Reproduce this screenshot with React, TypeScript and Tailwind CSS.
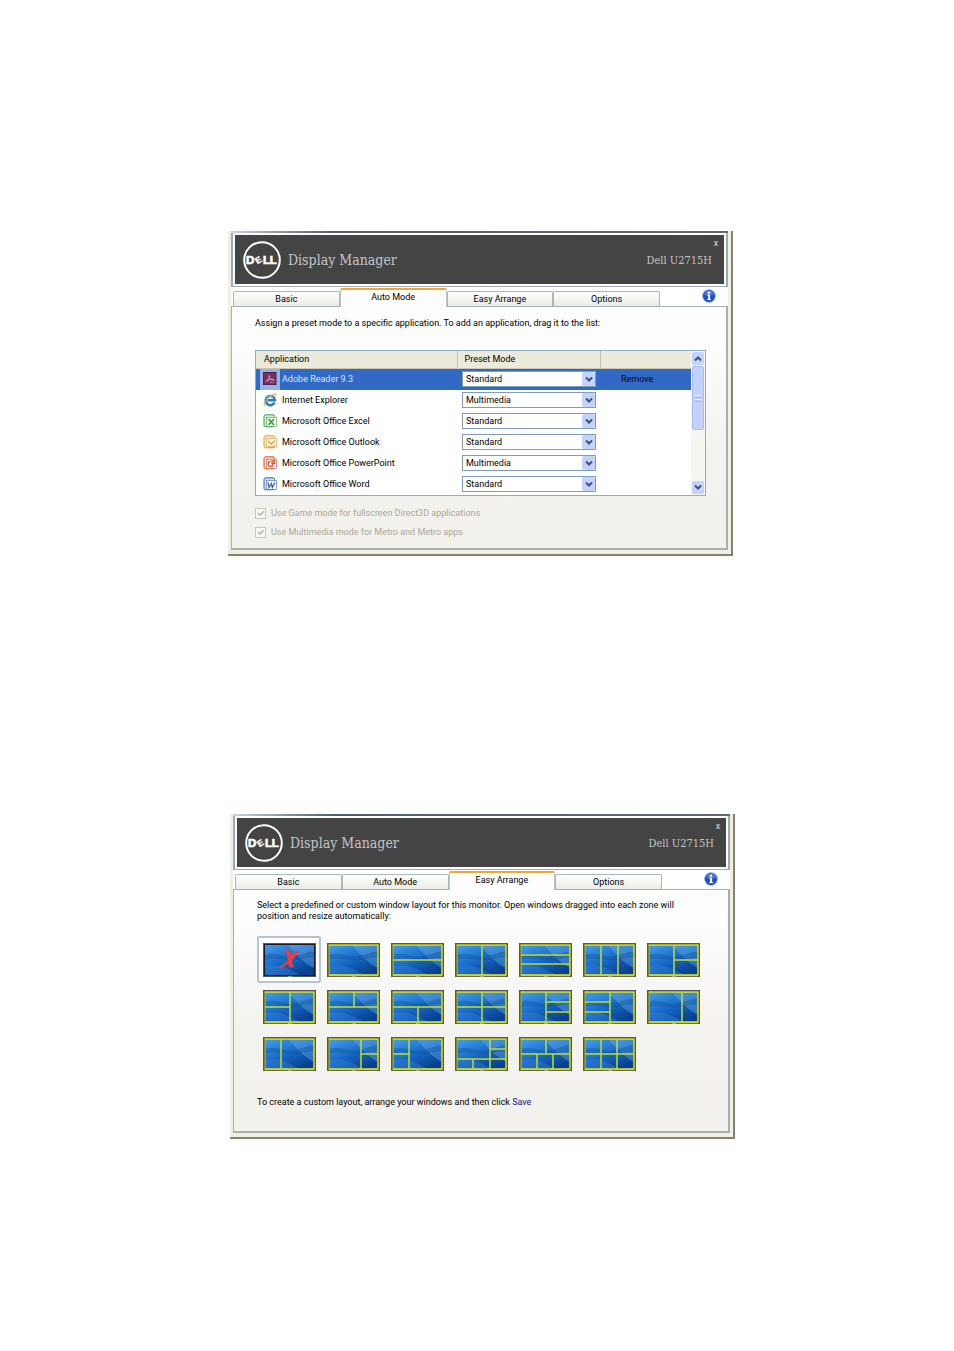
import { useId, useState } from 'react'
import type { ReactNode } from 'react'
import { twMerge } from 'tailwind-merge'

type Line = [number, number, number, number]

interface TypeApp {
  name: string
  mode: string
  icon: ReactNode
}

const TABS = ['Basic', 'Auto Mode', 'Easy Arrange', 'Options']
const MODES = ['Standard', 'Multimedia', 'Movie', 'Game', 'Paper', 'Color Temp.']

// divider lines inside a 53x34 monitor
const LAYOUTS: Line[][] = [
  [],
  [],
  [[2, 17, 51, 17]],
  [[27, 2, 27, 32]],
  [[2, 12, 51, 12], [2, 21, 51, 21]],
  [[18, 2, 18, 32], [35, 2, 35, 32]],
  [[27, 2, 27, 32], [27, 17, 51, 17]],
  [[27, 2, 27, 32], [2, 17, 27, 17]],
  [[2, 17, 51, 17], [27, 2, 27, 17]],
  [[2, 17, 51, 17], [27, 17, 27, 32]],
  [[27, 2, 27, 32], [2, 17, 51, 17]],
  [[27, 2, 27, 32], [27, 12, 51, 12], [27, 22, 51, 22]],
  [[27, 2, 27, 32], [2, 12, 27, 12], [2, 22, 27, 22]],
  [[35, 2, 35, 32]],
  [[18, 2, 18, 32]],
  [[34, 2, 34, 32], [34, 17, 51, 17]],
  [[18, 2, 18, 32], [2, 17, 18, 17]],
  [[35, 2, 35, 32], [35, 12, 51, 12], [2, 22, 51, 22], [18, 22, 18, 32]],
  [[2, 17, 51, 17], [27, 2, 27, 17], [18, 17, 18, 32], [34, 17, 34, 32]],
  [[18, 2, 18, 32], [34, 2, 34, 32], [2, 17, 51, 17]],
]

function DellLogo(){
  return <svg className="h-10 w-10 flex-none" viewBox="0 0 40 40" role="img" aria-label="Dell">
    <circle cx="20" cy="20" r="17.8" fill="none" stroke="#fff" strokeWidth="2" />
    <g fill="#fff" stroke="#fff" strokeWidth="0.7" fontFamily="'Liberation Sans', sans-serif" fontWeight="700" fontSize="11.5">
      <text x="4" y="24">D</text>
      <text x="13.400" y="23" transform="rotate(-32 16.500 20)" fontSize="9" strokeWidth="0.300">E</text>
      <text x="21" y="24">L</text>
      <text x="27.8" y="24">L</text>
    </g>
  </svg>
}

function InfoIcon(){
  return <svg className="h-3.5 w-3.5" viewBox="0 0 14 14">
    <circle cx="7" cy="7" r="6.3" fill="#1f4fc4" stroke="#7f9be0" strokeWidth="0.8" />
    <path d="M2 5.5a5.2 5.2 0 0 1 10 0c-3 1.300-7 1.300-10 0z" fill="#4d7be6" />
    <circle cx="7" cy="3.700" r="1.200" fill="#fff" />
    <path d="M5.400 5.800h2.700v4.200h.9v1.100H5.200V10h.9V6.900h-.7z" fill="#fff" />
  </svg>
}

function Chevron({ up }: { up?: boolean }){
  return <svg className="h-2 w-2" viewBox="0 0 8 8">
    <path d={up ? 'M1 5.500l3-3 3 3' : 'M1 2.500l3 3 3-3'} fill="none" stroke="#3c5079" strokeWidth="2" />
  </svg>
}

function AdobeIcon(){
  return <svg className="h-3.5 w-3.5" viewBox="0 0 14 14">
    <rect x="0.500" y="0.500" width="12.500" height="12" fill="#7a2f62" stroke="#4c2457" />
    <path d="M3 9.500c2-1 3.500-3.500 3.300-6M6.200 3.500c0 2.500 2 4.500 5 4.500M3 9.500c2.500-2 5-2.300 8-1.500M7 10.500h1.500M10 10.500h1" fill="none" stroke="#d9a9c6" strokeWidth="0.900" />
  </svg>
}

function ExplorerIcon(){
  return <svg className="h-3.5 w-3.5" viewBox="0 0 14 14">
    <path d="M11.500 9.500a4.600 4.600 0 1 1 .4-2.200H4.500" fill="none" stroke="#2479d4" strokeWidth="2.600" />
    <path d="M3.400 6a4 4 0 0 1 6.500-1.500" fill="none" stroke="#79c6f7" strokeWidth="1" />
    <path d="M1.800 12.800C-.5 11 5.500 3 10.500 1.300c2.500-.8 2.800.4 2.200 2" fill="none" stroke="#efb035" strokeWidth="1.200" />
  </svg>
}

function OfficeIcon({ color, tint, children }: { color: string, tint: string, children: ReactNode }){
  return <svg className="h-3.5 w-3.5" viewBox="0 0 14 14">
    <rect x="1" y="0.800" width="10.500" height="12" rx="1.500" fill={tint} stroke={color} strokeWidth="1" />
    <rect x="3.300" y="3.300" width="10" height="9" fill="#fff" stroke={color} strokeWidth="0.600" />
    <g fill="none" stroke={color} strokeWidth="1.800">{children}</g>
  </svg>
}

const APPS: TypeApp[] = [
  { name: 'Adobe Reader 9.3', mode: 'Standard', icon: <AdobeIcon /> },
  { name: 'Internet Explorer', mode: 'Multimedia', icon: <ExplorerIcon /> },
  {
    name: 'Microsoft Office Excel',
    mode: 'Standard',
    icon: <OfficeIcon color="#3f9a47" tint="#d5efd2"><path d="M5.500 5l5.500 6M11 5l-5.500 6" /></OfficeIcon>
  },
  {
    name: 'Microsoft Office Outlook',
    mode: 'Standard',
    icon: <OfficeIcon color="#e5a03a" tint="#fde9bd"><path d="M5 6l3.300 3L12 5.500M5 11c2 1.500 5 1.500 7-.5" strokeWidth="1.400" /></OfficeIcon>
  },
  {
    name: 'Microsoft Office PowerPoint',
    mode: 'Multimedia',
    icon: <OfficeIcon color="#e2562b" tint="#fbd3c2"><path d="M7.500 5.500a2.500 2.500 0 1 0 2.500 3M9 7.500V5h2.500v2.500z" strokeWidth="1.300" /></OfficeIcon>
  },
  {
    name: 'Microsoft Office Word',
    mode: 'Standard',
    icon: <OfficeIcon color="#3a66b0" tint="#cfe0f6"><path d="M5 5.500l1 5 2.500-4 .8 4 2.700-5" strokeWidth="1.300" /></OfficeIcon>
  },
]

function Monitor({ lines, off }: { lines: Line[], off?: boolean }){
  const id = useId()
  return <svg className="h-[34px] w-[53px]" viewBox="0 0 53 34">
    <defs>
      <linearGradient id={id} x1="0" y1="0" x2="0.700" y2="1">
        <stop offset="0" stopColor="#459eee" />
        <stop offset="0.550" stopColor="#1769c6" />
        <stop offset="1" stopColor="#07408f" />
      </linearGradient>
    </defs>
    <rect x="0.500" y="0.500" width="52" height="33" fill="#1b1b22" stroke="#55555c" />
    <rect x="2" y="2" width="49" height="30" fill={`url(#${id})`} />
    <path d="M25 2h26v23C42 20 33 12 25 2z" fill="#7db9f0" opacity="0.350" />
    <path d="M2 12c12-4 20 4 31 1s12-5 18-4v6c-10-1-16 4-27 2S8 15 2 17z" fill="#0d4f86" opacity="0.350" />
    <path d="M2 23c14-3 24 3 35 9H2z" fill="#3d8de6" opacity="0.350" />
    {
      off
        ? <path d="M15.500 24.500C22 21 28 15 32 8l4.500-.5C31 16 25 22 18.500 24.800zM20.500 8l4.500-1c2 0 2.500 2 3 5l1.500 9c.2 1.300.8 1.700 2 1.500-.8 1.500-2 2-3.500 2-2 0-2.400-1.500-2.800-4L24 12c-.4-2-.8-3-3.500-4z" fill="#f03c40" />
        : <g fill="none">
          <path d="M2 1.500v31h49" stroke="#a9ad12" strokeWidth="1.500" />
          <path d="M1.500 2H51v30H2" stroke="#d8e818" strokeWidth="1.500" />
          {lines.map((l, i)=><line key={i} x1={l[0]} y1={l[1]} x2={l[2]} y2={l[3]} stroke="#bfdd2c" strokeWidth="1.500" />)}
        </g>
    }
    <path d="M25 33.300h4" stroke="#b0b0a8" strokeWidth="1" />
  </svg>
}

interface WindowProps {
  active: string
  className?: string
  children: ReactNode
}

function ManagerWindow(props: WindowProps){
  const { active, className, children } = props
  return <section className={twMerge('flex w-full max-w-[505px] flex-col border-b-2 border-r-2 border-[#85836f] bg-[#f1eee2] pb-1 pl-[3px] pr-[3px]', className)}>
    <div className="h-0.5 bg-linear-to-r from-[#c3d6e4] via-[#4f6072] via-20% to-[#5d6b7a]" />
    <header className="border-x-2 border-b border-[#9aaab8] bg-white p-0.5">
      <div className="flex h-[49px] items-center bg-[#444] pl-[7px] pr-3">
        <DellLogo />
        <h1 className="ml-1.5 flex-1 font-['DejaVu_Serif_Condensed','DejaVu_Serif',serif] text-[14px] leading-4 text-[#c4c4c4]">Display Manager</h1>
        <div className="flex flex-col items-end self-stretch">
          <button type="button" aria-label="Close" className="-mr-2.5 h-4 w-3 text-[9px] leading-4 text-[#ddd]">x</button>
          <span className="pt-0.5 font-['DejaVu_Serif_Condensed','DejaVu_Serif',serif] text-[11px] leading-4 text-[#c4c4c4]">Dell U2715H</span>
        </div>
      </div>
    </header>
    <div className="flex bg-white pt-px">
      <div role="tablist" className="flex h-[18px] flex-1 items-end pl-0.5">
        {
          TABS.map(tab=>{
            const on = tab === active
            return <button type="button" role="tab" aria-selected={on} key={tab}
              className={twMerge(
                'h-[15px] flex-1 rounded-t-xs border border-b-0 border-[#a9b8b9] bg-linear-to-b from-white to-[#ecebe5] text-center leading-[14px]',
                on && 'z-10 -mb-px h-[19px] border-x-[#b9c6c8] border-t-2 border-t-[#f0a832] bg-none bg-[#fdfdfe] pb-1'
              )}>{tab}</button>
          })
        }
      </div>
      <button type="button" aria-label="About" className="mx-3 ml-[42px] flex h-4 items-center"><InfoIcon /></button>
    </div>
    <div role="tabpanel" className="h-[244px] border border-b-2 border-r-2 border-[#a3b1b5] bg-linear-to-b from-[#fdfdfe] from-15% via-[#f4f2ee] via-60% to-[#f3f1ec] pl-[23px] pr-5">
      {children}
    </div>
  </section>
}

function ModeSelect({ app }: { app: TypeApp }){
  return <div className="relative h-4 w-[134px]">
    <select aria-label={`Preset mode for ${app.name}`} defaultValue={app.mode}
      className="block h-4 w-full appearance-none border border-[#7f9db9] bg-white pl-[3px] leading-[14px]">
      {MODES.map(mode=><option key={mode}>{mode}</option>)}
    </select>
    <span className="pointer-events-none absolute inset-y-px right-px flex w-[13px] items-center justify-center rounded-xs bg-[#c4d3fb]"><Chevron /></span>
  </div>
}

function AutoMode(){
  return <>
    <p className="mt-2 leading-4">Assign a preset mode to a specific application. To add an application, drag it to the list:</p>
    <div className="mt-[19px] flex border border-[#8fadc8] bg-white">
      <table className="flex-1 table-fixed border-collapse">
        <thead>
          <tr className="h-[17px] border-b border-[#cbc7b8] bg-[#ebeadb] text-left leading-4">
            <th className="p-0 pl-2 font-normal">Application</th>
            <th className="w-[143px] border-l border-[#c7c5b2] p-0 pl-[7px] font-normal">Preset Mode</th>
            <th aria-label="Action" className="w-[91px] border-l border-[#c7c5b2]" />
          </tr>
        </thead>
        <tbody>
          {
            APPS.map((app, index)=>{
              return <tr className={twMerge('h-[21px]', index === 0 && 'bg-[#316ac5]')} key={app.name}>
                <td className="p-0 pl-1">
                  <div className={twMerge('flex items-center', index === 0 && 'text-[#dce6f7]')}>
                    <span className={twMerge('flex h-[21px] w-5 items-center justify-center', index === 0 && 'bg-[#98b4e2]')}>{app.icon}</span>
                    <span className="pl-0.5 pt-0.5">{app.name}</span>
                  </div>
                </td>
                <td className="p-0 pl-[5px]"><ModeSelect app={app} /></td>
                <td className="p-0 pl-[21px]">{index === 0 && <button type="button" className="block leading-4">Remove</button>}</td>
              </tr>
            })
          }
        </tbody>
      </table>
      <div className="flex w-3.5 flex-col bg-[#f6f5f0] p-px">
        <button type="button" aria-label="Scroll up" className="flex h-[13px] items-center justify-center rounded-xs bg-[#c4d3fb]"><Chevron up /></button>
        <div className="mt-px flex h-16 flex-col items-center justify-center gap-px rounded-xs border border-[#a9bdf0] bg-[#c2d2fc]">
          <i className="h-px w-1.5 bg-[#eef3ff]" />
          <i className="h-px w-1.5 bg-[#9db2ea]" />
          <i className="h-px w-1.5 bg-[#eef3ff]" />
          <i className="h-px w-1.5 bg-[#9db2ea]" />
        </div>
        <button type="button" aria-label="Scroll down" className="mt-auto flex h-[13px] items-center justify-center rounded-xs bg-[#c4d3fb]"><Chevron /></button>
      </div>
    </div>
    <div className="mt-2.5 flex flex-col gap-[3px] text-[#aaa899]">
      <DisabledCheck label="Use Game mode for fullscreen Direct3D applications" />
      <DisabledCheck label="Use Multimedia mode for Metro and Metro apps" />
    </div>
  </>
}

function DisabledCheck({ label }: { label: string }){
  return <label className="flex h-4 items-center">
    <span className="relative h-[11px] w-[11px]">
      <input type="checkbox" checked disabled readOnly className="block h-[11px] w-[11px] appearance-none border border-[#cac8bb] bg-[#f8f7f3]" />
      <svg className="pointer-events-none absolute inset-0" viewBox="0 0 11 11"><path d="M3 5l2 2 3.500-3.500" fill="none" stroke="#b3b1a2" strokeWidth="1.500" /></svg>
    </span>
    <span className="pl-[5px]">{label}</span>
  </label>
}

function EasyArrange(){
  const [picked, setPicked] = useState(0)
  return <>
    <p className="mt-2.5 leading-[11px]">Select a predefined or custom window layout for this monitor. Open windows dragged into each zone will position and resize automatically:</p>
    <div className="mt-3.5 grid w-[448px] grid-cols-7">
      {
        LAYOUTS.map((lines, index)=>{
          return <button type="button" aria-label={`Layout ${index + 1}`} aria-pressed={picked === index} key={index}
            className={twMerge('flex h-[47px] items-center justify-center rounded-xs border-2 border-transparent', picked === index && 'border-[#b3c3d8] bg-white')}
            onClick={()=>{
              setPicked(index)
            }}>
            <Monitor lines={lines} off={index === 0} />
          </button>
        })
      }
    </div>
    <p className="mt-[17px] leading-4">To create a custom layout, arrange your windows and then click <a href="#save" className="text-[#16168f]">Save</a></p>
  </>
}

function App(){
  return <main className="min-h-screen bg-white pb-52 pl-[228px] pt-[231px] font-['Roboto','Noto_Sans',sans-serif] text-[9px] text-black">
    <ManagerWindow active="Auto Mode">
      <AutoMode />
    </ManagerWindow>
    <ManagerWindow active="Easy Arrange" className="ml-0.5 mt-[258px]">
      <EasyArrange />
    </ManagerWindow>
  </main>
}

export default App
